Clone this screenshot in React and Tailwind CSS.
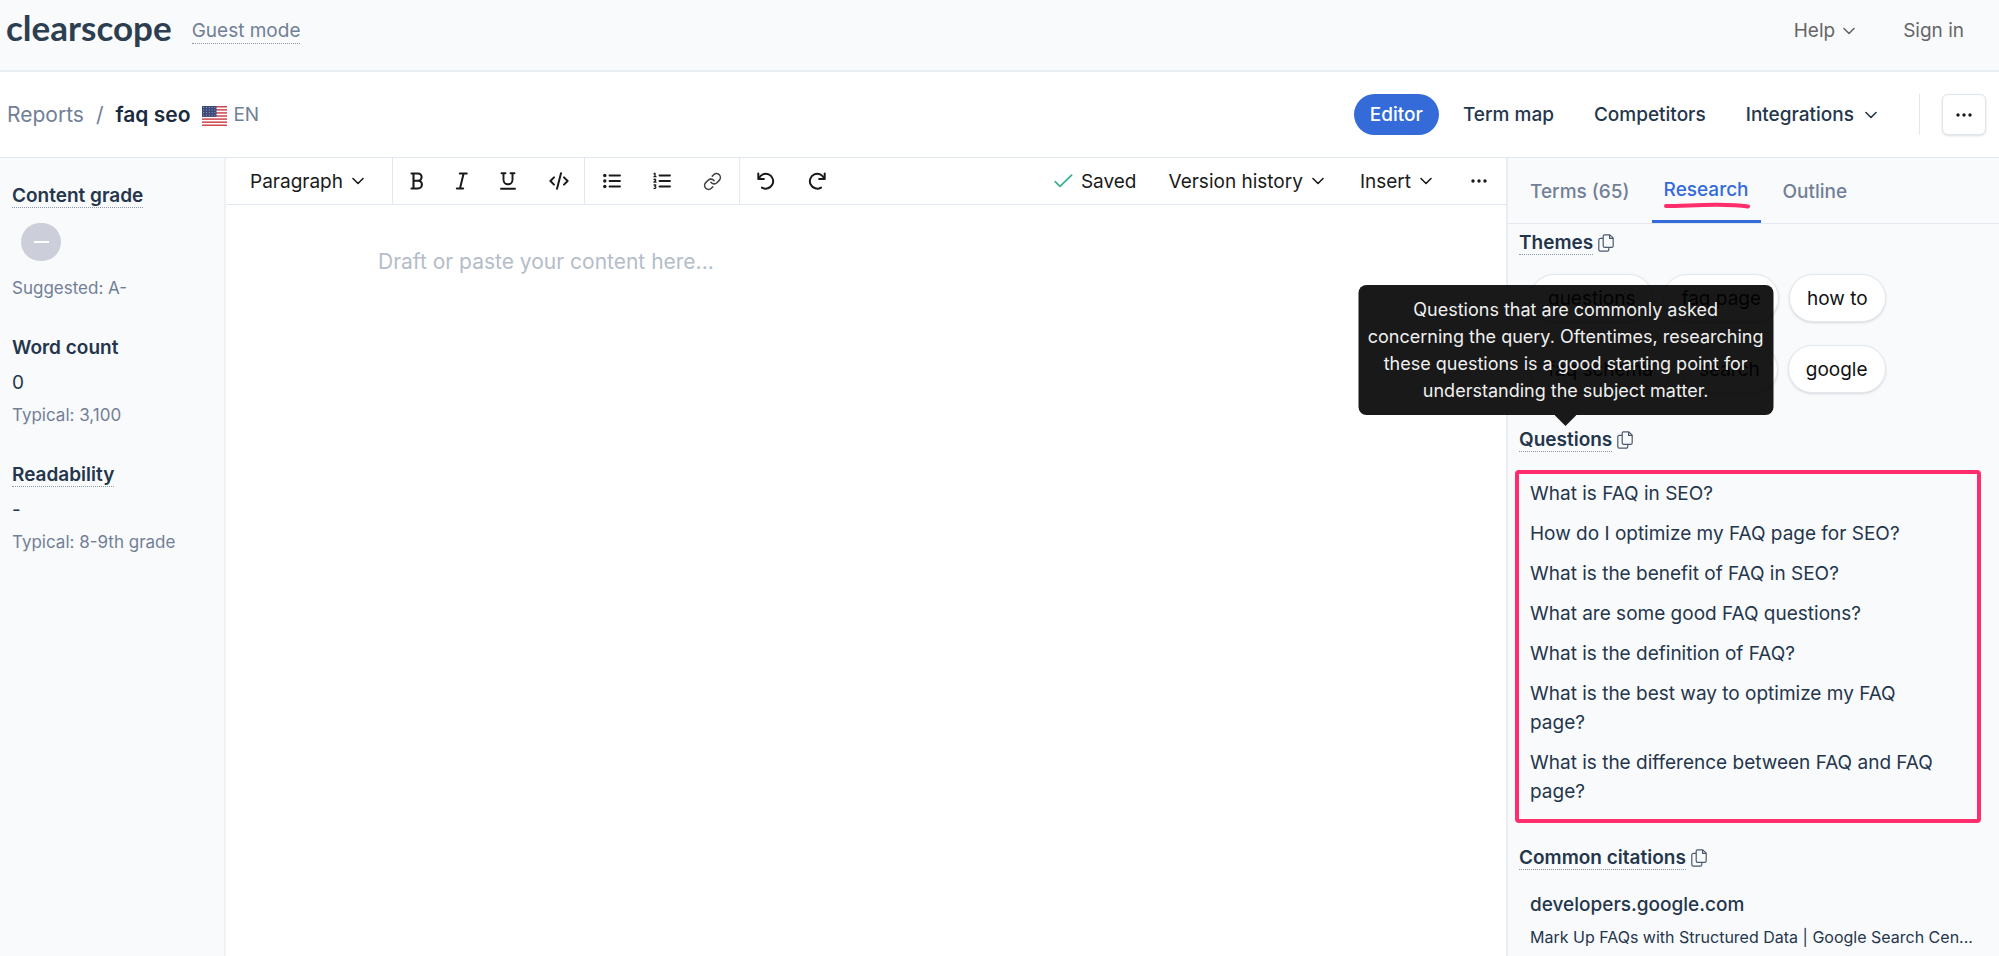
import React from "react";
import { Link } from "lucide-react";

const themes = ["questions", "faq page", "how to", "faq schema", "search", "google"];

const questions = [
  "What is FAQ in SEO?",
  "How do I optimize my FAQ page for SEO?",
  "What is the benefit of FAQ in SEO?",
  "What are some good FAQ questions?",
  "What is the definition of FAQ?",
  "What is the best way to optimize my FAQ page?",
  "What is the difference between FAQ and FAQ page?",
];

function Chevron() {
  return (
    <svg className="mb-[2px]" width="12" height="8" viewBox="0 0 12 8" fill="none" stroke="currentColor" strokeWidth="1.6" strokeLinecap="round" strokeLinejoin="round" aria-hidden="true">
      <path d="M1 1.5 6 6.5 11 1.5" />
    </svg>
  );
}

function Dots() {
  return (
    <svg width="16" height="4" viewBox="0 0 16 4" fill="currentColor" aria-hidden="true">
      <circle cx="2" cy="2" r="1.7" />
      <circle cx="8" cy="2" r="1.7" />
      <circle cx="14" cy="2" r="1.7" />
    </svg>
  );
}

function CopyIcon() {
  return (
    <svg width="16" height="18" viewBox="0 0 16 18" fill="none" stroke="currentColor" strokeWidth="1.2" strokeLinejoin="round" aria-hidden="true">
      <path d="M6.2.8h5.6l3.4 3.4v7.6a1.6 1.6 0 0 1-1.6 1.6H6.8a1.6 1.6 0 0 1-1.6-1.6V2.2A1.4 1.4 0 0 1 6.2.8Z" />
      <path d="M11.6.9v3.5h3.5" />
      <path d="M5.2 4.4H2.4A1.6 1.6 0 0 0 .8 6v9.6a1.6 1.6 0 0 0 1.6 1.6h6.8a1.6 1.6 0 0 0 1.6-1.6v-2.1" />
    </svg>
  );
}

function Icon({ children, width = 1.8 }) {
  return (
    <svg width="18" height="18" viewBox="0 0 18 18" fill="none" stroke="currentColor" strokeWidth={width} strokeLinecap="round" strokeLinejoin="round" aria-hidden="true">
      {children}
    </svg>
  );
}

function Flag() {
  return (
    <svg width="25" height="20" viewBox="0 0 25 20" aria-hidden="true">
      <rect width="25" height="20" fill="#fff" />
      {[0, 1, 2, 3, 4, 5, 6].map((i) => (
        <rect key={i} y={i * 3.08} width="25" height="1.54" fill="#cf4a52" />
      ))}
      <rect width="14.5" height="10.8" fill="#3b4a78" />
      {[0, 1, 2, 3].map((r) =>
        [0, 1, 2, 3, 4].map((c) => (
          <circle key={r + "-" + c} cx={1.7 + c * 2.8} cy={1.6 + r * 2.5} r="0.5" fill="#a9b3cd" />
        ))
      )}
    </svg>
  );
}

function Tool({ label, className, children }) {
  return (
    <button type="button" aria-label={label} className={"flex items-center justify-center " + className}>
      {children}
    </button>
  );
}

function SectionHeading({ title, children }) {
  return (
    <div className="flex items-center gap-[5px]">
      <h2 className="relative h-[25px] border-b border-dotted border-[#8a98aa] font-semibold leading-[25px]">
        {title}
        {children}
      </h2>
      <button type="button" aria-label={"Copy " + title} className="text-[#4a5a6c]">
        <CopyIcon />
      </button>
    </div>
  );
}

function Metric({ title, value, hint, dotted }) {
  return (
    <section className="mt-[33px]">
      <h2 className={"h-[25px] w-fit border-b font-semibold leading-[26px] " + (dotted ? "border-dotted border-[#8a98aa]" : "border-transparent")}>{title}</h2>
      <p className="mt-[9px] leading-7">{value}</p>
      <p className="mt-1 text-[17px] leading-7 text-[#718096]">{hint}</p>
    </section>
  );
}

export default function App() {
  return (
    <div className="flex min-h-screen flex-col bg-white font-['Inter',sans-serif] text-[19px] text-[#24364b]">
      <header className="flex h-[72px] items-center justify-between border-b-2 border-[#e8eef4] bg-[#f9fafc] pb-[7px] pl-[6px] pr-[35px]">
        <div className="flex items-center gap-5">
          <a href="#home" className="pb-[10px] font-['Lato',sans-serif] text-[35px] font-bold leading-10 text-[#2c3e50]">clearscope</a>
          <a href="#guest" className="border-b border-dotted border-[#8a98aa] leading-6 text-[#718096]">Guest mode</a>
        </div>
        <nav className="flex items-center gap-12 text-[#666]">
          <button type="button" className="flex items-center gap-2">
            Help
            <Chevron />
          </button>
          <a href="#signin">Sign in</a>
        </nav>
      </header>

      <div className="flex h-[86px] items-center justify-between border-b border-[#e2e8f0] pl-[7px] pr-[13px]">
        <div className="flex items-center gap-3 text-[21px] text-[#718096]">
          <a href="#reports">Reports</a>
          <span>/</span>
          <h1 className="font-semibold text-[#1a2b3f]">faq seo</h1>
          <span className="flex items-center gap-[6px] pt-[2px] text-[19px]">
            <Flag />
            EN
          </span>
        </div>
        <div className="flex items-center">
          <nav className="flex items-center gap-2 font-medium">
            <a href="#editor" className="flex h-[41px] items-center rounded-full bg-[#346bd8] px-4 pt-[2px] text-white">Editor</a>
            <a href="#terms" className="px-4 pt-[2px]">Term map</a>
            <a href="#competitors" className="px-4 pt-[2px]">Competitors</a>
            <button type="button" className="flex items-center gap-[11px] px-4 pt-[2px] font-medium">
              Integrations
              <Chevron />
            </button>
          </nav>
          <div className="ml-[26px] mr-[22px] h-[41px] w-px bg-[#e2e8f0]" />
          <button type="button" aria-label="More actions" className="flex h-[41px] w-[44px] items-center justify-center rounded-md border border-[#dde4ec] bg-white text-[#1a1a1a] shadow-sm">
            <Dots />
          </button>
        </div>
      </div>

      <div className="flex flex-1">
        <aside className="w-[226px] shrink-0 border-r-2 border-[#edf2f7] bg-[#f9fafc] pl-3 pt-[25px]">
          <section>
            <h2 className="h-[25px] w-fit border-b border-dotted border-[#8a98aa] font-semibold leading-[26px]">Content grade</h2>
            <div className="ml-[9px] mt-[15px] flex h-[38px] w-10 items-center justify-center rounded-full bg-[#cccfd9]">
              <span className="h-[2px] w-[15px] bg-white" />
            </div>
            <p className="mt-[13px] text-[17px] leading-7 text-[#718096]">Suggested: A-</p>
          </section>
          <Metric title="Word count" value="0" hint="Typical: 3,100" />
          <Metric title="Readability" value="-" hint="Typical: 8-9th grade" dotted />
        </aside>

        <main className="flex min-w-0 flex-1 flex-col">
          <div className="flex h-[47px] items-stretch justify-between border-b border-[#e2e8f0] text-[#1a1a1a]">
            <div className="flex">
              <button type="button" className="flex w-[167px] items-center gap-[9px] border-r border-[#e2e8f0] pl-6 pt-[2px]">
                Paragraph
                <Chevron />
              </button>
              <div className="flex border-r border-[#e2e8f0]">
                <Tool label="Bold" className="w-[47px]">
                  <Icon width={2.1}>
                    <path d="M3.5 1.5H10a3.6 3.6 0 0 1 0 7.2H5.5M10 8.7a3.9 3.9 0 0 1 0 7.8H3.5M5.5 1.5v15" />
                  </Icon>
                </Tool>
                <Tool label="Italic" className="w-[43px]">
                  <Icon width={2}>
                    <path d="M6.8 1.5h7M3.8 16.5h6.4M10.6 1.5 7 16.5" />
                  </Icon>
                </Tool>
                <Tool label="Underline" className="w-[50px]">
                  <Icon width={1.9}>
                    <path d="M2.5 1.2h4M11.5 1.2h4M4.5 1.2v6.6a4.5 4.5 0 0 0 9 0V1.2M2 16.8h14" />
                  </Icon>
                </Tool>
                <Tool label="Code" className="w-[51px]">
                  <svg width="20" height="18" viewBox="0 0 20 18" fill="none" stroke="currentColor" strokeWidth="2" strokeLinecap="round" strokeLinejoin="round" aria-hidden="true">
                    <path d="M5 5.4 1.4 9 5 12.6M15 5.4 18.6 9 15 12.6M12 1.2 8 16.8" />
                  </svg>
                </Tool>
              </div>
              <div className="flex border-r border-[#e2e8f0] px-px">
                <Tool label="Bulleted list" className="w-[51px]">
                  <Icon width={1.8}>
                    <path d="M6.5 3.5h10.5M6.5 9h10.5M6.5 14.5h10.5" />
                    <g fill="currentColor" stroke="none">
                      <circle cx="1.8" cy="3.5" r="1.7" />
                      <circle cx="1.8" cy="9" r="1.7" />
                      <circle cx="1.8" cy="14.5" r="1.7" />
                    </g>
                  </Icon>
                </Tool>
                <Tool label="Numbered list" className="w-[50px]">
                  <Icon width={1.8}>
                    <path d="M6.5 3.5h10.5M6.5 9h10.5M6.5 14.5h10.5" />
                    <path strokeWidth="1.3" d="M1 1.8 2 1.2v3.4M1 4.7h2M1 7.4c1.6-.8 2.4.5 1 1.6l-1 1.2h2M1 12.9h1.8L1.9 14.4c1.6.2 1.2 2.4-.9 1.9" />
                  </Icon>
                </Tool>
                <Tool label="Link" className="w-[51px] text-[#444]">
                  <Link size={19} strokeWidth={2} />
                </Tool>
              </div>
              <Tool label="Undo" className="w-[51px]">
                <Icon width={2}>
                  <path d="M1.3 1.5v5.6h5.6" />
                  <path d="M1.8 6.6A7.4 7.4 0 1 1 5 15.6" />
                </Icon>
              </Tool>
              <Tool label="Redo" className="w-[51px]">
                <Icon width={2}>
                  <path d="M16.7 1.5v5.6h-5.6" />
                  <path d="M16.2 6.6A7.4 7.4 0 1 0 13 15.6" />
                </Icon>
              </Tool>
            </div>
            <div className="flex items-center pr-[19px] pt-[2px]">
              <span className="flex items-center gap-2">
                <svg className="mb-[2px]" width="19" height="14" viewBox="0 0 19 14" fill="none" stroke="#3bb08f" strokeWidth="1.8" strokeLinecap="round" strokeLinejoin="round" aria-hidden="true">
                  <path d="M1.2 7.6 6 12.4 17.6 1.2" />
                </svg>
                Saved
              </span>
              <button type="button" className="ml-8 flex items-center gap-[9px]">
                Version history
                <Chevron />
              </button>
              <button type="button" className="ml-9 flex items-center gap-[9px]">
                Insert
                <Chevron />
              </button>
              <button type="button" aria-label="More tools" className="ml-[39px] flex h-8 items-center pb-[2px]">
                <Dots />
              </button>
            </div>
          </div>
          <textarea
            aria-label="Content"
            placeholder="Draft or paste your content here..."
            className="w-full flex-1 resize-none bg-white px-[152px] pt-10 text-[21px] leading-[34px] outline-none placeholder:text-[#b4bdc8]"
          />
        </main>

        <aside className="w-[493px] shrink-0 border-l-2 border-[#e8edf4] bg-[#f9fafc]">
          <div className="flex h-[66px] items-stretch gap-[10px] border-b border-[#e2e8f0] pl-[10px] font-medium text-[#718096]">
            <button type="button" className="px-3 pt-[3px]">Terms (65)</button>
            <button type="button" className="relative border-b-[3px] border-[#346bd8] px-3 pt-[3px] text-[#346bd8]">
              Research
              <svg className="absolute left-3 top-[44px]" width="86" height="8" viewBox="0 0 86 8" fill="none" stroke="#ff2d6b" strokeWidth="4" strokeLinecap="round" aria-hidden="true">
                <path d="M2 4C25 4 60 .8 84 4.5" />
              </svg>
            </button>
            <button type="button" className="px-3 pt-[3px]">Outline</button>
          </div>

          <div className="pb-1 pl-[11px] pr-[11px] pt-[6px]">
            <SectionHeading title="Themes" />
            <ul className="ml-[11px] mt-[19px] flex flex-wrap gap-x-[10px] gap-y-[23px] text-[#111]">
              {themes.map((t) => (
                <li key={t}>
                  <button type="button" className="h-12 rounded-full border border-[#e2e8f0] bg-white px-[17px] pt-[2px] shadow-sm">{t}</button>
                </li>
              ))}
            </ul>

            <div className="mt-[34px]">
              <SectionHeading title="Questions">
                <span role="tooltip" className="absolute bottom-9 left-1/2 w-[415px] -translate-x-1/2 rounded-lg bg-black/90 px-2 py-[11px] text-center text-[18px] font-normal leading-[27px] text-[#f0f0f0]">
                  Questions that are commonly asked concerning the query. Oftentimes, researching these questions is a good starting point for understanding the subject matter.
                  <svg className="absolute left-1/2 top-full -translate-x-1/2" width="22" height="11" viewBox="0 0 22 11" fill="#000" fillOpacity="0.9" aria-hidden="true">
                    <path d="M0 0h22L11 11Z" />
                  </svg>
                </span>
              </SectionHeading>
            </div>
            <ul className="-ml-1 mr-[7px] mt-[18px] flex flex-col gap-[11px] rounded-sm border-4 border-[#ff2d6b] pb-[13px] pl-[11px] pr-9 pt-[5px] leading-[29px]">
              {questions.map((q) => (
                <li key={q}>{q}</li>
              ))}
            </ul>

            <div className="mt-[22px]">
              <SectionHeading title="Common citations" />
            </div>
            <div className="ml-[11px] mt-[21px]">
              <a href="#citation" className="block font-medium leading-7">developers.google.com</a>
              <p className="mt-1 whitespace-nowrap text-[16px] leading-7">Mark Up FAQs with Structured Data | Google Search Cen...</p>
            </div>
          </div>
        </aside>
      </div>
    </div>
  );
}
